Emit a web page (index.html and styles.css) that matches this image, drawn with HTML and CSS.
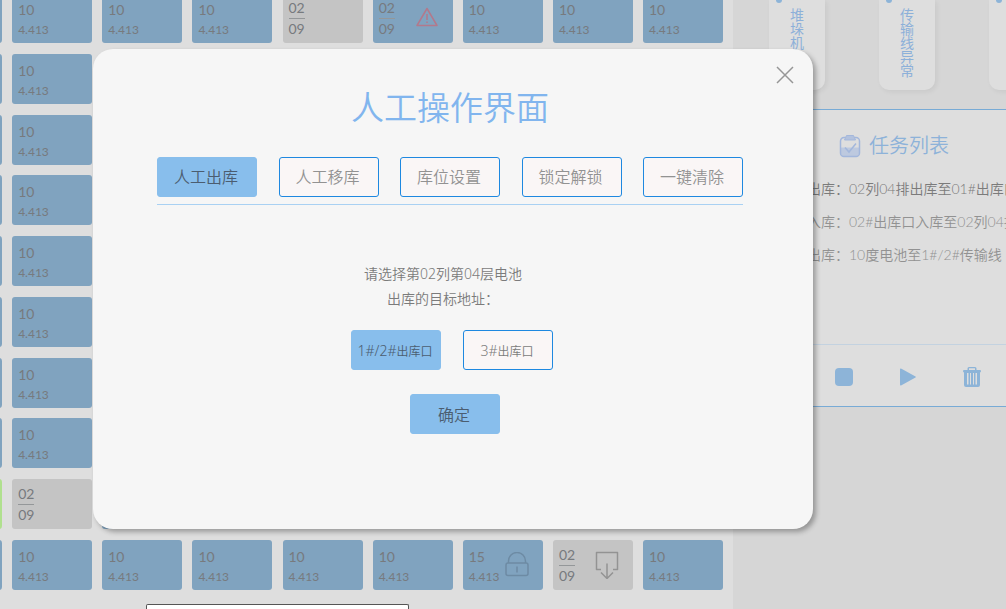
FILE: index.html
```html
<!DOCTYPE html>
<html lang="zh-CN">
<head>
<meta charset="utf-8">
<title>人工操作界面</title>
<link rel="stylesheet" href="styles.css">
</head>
<body>
<div class="app">
  <main class="board">
    <div class="rack">
      <div class="row">
        <div class="cell"></div>
        <div class="cell"><span class="deg">10</span><span class="volt">4.413</span></div>
        <div class="cell"><span class="deg">10</span><span class="volt">4.413</span></div>
        <div class="cell"><span class="deg">10</span><span class="volt">4.413</span></div>
        <div class="cell pos empty"><span class="col">02</span><span class="lay">09</span></div>
        <div class="cell pos"><span class="col">02</span><span class="lay">09</span>
          <svg class="mark alarm" width="24" height="24" viewBox="0 0 24 24"><path d="M12 1.500 22 18.500H2Z"/><path d="M12 7v6M12 14.500v1.500"/></svg></div>
        <div class="cell"><span class="deg">10</span><span class="volt">4.413</span></div>
        <div class="cell"><span class="deg">10</span><span class="volt">4.413</span></div>
        <div class="cell"><span class="deg">10</span><span class="volt">4.413</span></div>
      </div>
      <div class="row"><div class="cell"></div><div class="cell"><span class="deg">10</span><span class="volt">4.413</span></div></div>
      <div class="row"><div class="cell"></div><div class="cell"><span class="deg">10</span><span class="volt">4.413</span></div></div>
      <div class="row"><div class="cell"></div><div class="cell"><span class="deg">10</span><span class="volt">4.413</span></div></div>
      <div class="row"><div class="cell"></div><div class="cell"><span class="deg">10</span><span class="volt">4.413</span></div></div>
      <div class="row"><div class="cell"></div><div class="cell"><span class="deg">10</span><span class="volt">4.413</span></div></div>
      <div class="row"><div class="cell"></div><div class="cell"><span class="deg">10</span><span class="volt">4.413</span></div></div>
      <div class="row"><div class="cell"></div><div class="cell"><span class="deg">10</span><span class="volt">4.413</span></div></div>
      <div class="row"><div class="cell active"></div><div class="cell pos empty"><span class="col">02</span><span class="lay">09</span></div><div class="cell"></div></div>
      <div class="row">
        <div class="cell"></div>
        <div class="cell"><span class="deg">10</span><span class="volt">4.413</span></div>
        <div class="cell"><span class="deg">10</span><span class="volt">4.413</span></div>
        <div class="cell"><span class="deg">10</span><span class="volt">4.413</span></div>
        <div class="cell"><span class="deg">10</span><span class="volt">4.413</span></div>
        <div class="cell"><span class="deg">10</span><span class="volt">4.413</span></div>
        <div class="cell"><span class="deg">15</span><span class="volt">4.413</span>
          <svg class="mark lock" width="24" height="30" viewBox="0 0 24 30"><rect x="1" y="11" width="22" height="12.500" rx="2"/><path d="M3.500 11V9a8.500 8.500 0 0 1 17 0v2M12 14.500v6"/></svg></div>
        <div class="cell pos empty"><span class="col">02</span><span class="lay">09</span>
          <svg class="mark out" width="24" height="28" viewBox="0 0 24 28"><path d="M6 18.500H1.500V1.500h21v17H18M12 12.500v15M6 21.500l6 6 6-6"/></svg></div>
        <div class="cell"><span class="deg">10</span><span class="volt">4.413</span></div>
      </div>
    </div>
    <div class="legend"></div>
  </main>

  <aside class="side">
    <div class="alarms">
      <div class="alarm-card"><i class="dot"></i><span>堆垛机</span></div>
      <div class="alarm-card"><i class="dot"></i><span>传输线异常</span></div>
      <div class="alarm-card"><i class="dot"></i></div>
    </div>
    <section class="tasks">
      <h2 class="tasks-title">
        <svg width="22" height="24" viewBox="0 0 22 24"><path class="clip-fill" d="M2 13.500h18V19a3 3 0 0 1-3 3H5a3 3 0 0 1-3-3Z"/><path class="clip-line" d="M6.500 3.500H5a3.500 3.500 0 0 0-3.500 3.500v12A3.500 3.500 0 0 0 5 22.500h12a3.500 3.500 0 0 0 3.500-3.500V7A3.500 3.500 0 0 0 17 3.500h-1.500"/><path class="clip-top" d="M7.500 1.500h7l2 4.500h-11Z"/><path class="clip-check" d="m6 13.500 4 4.500 7-8.500"/></svg>
        任务列表
      </h2>
      <ul class="task-list">
        <li class="current">出库<span class="colon">：</span>02列04排出库至01#出库口</li>
        <li>入库<span class="colon">：</span>02#出库口入库至02列04排</li>
        <li>出库<span class="colon">：</span>10度电池至1#/2#传输线</li>
      </ul>
      <div class="controls">
        <button type="button" aria-label="停止"><svg width="20" height="20" viewBox="0 0 20 20"><rect x="1" y="1" width="18" height="18" rx="4"/></svg></button>
        <button type="button" aria-label="开始"><svg width="20" height="20" viewBox="0 0 20 20"><path d="M2 2.500Q2 1 3.500 1.800L17.500 9.500q1 .500 0 1L3.500 18.200Q2 19 2 17.500Z"/></svg></button>
        <button type="button" aria-label="删除"><svg width="20" height="22" viewBox="0 0 20 22"><path fill-rule="evenodd" d="M5.500 4V2.500Q5.500 1 7 1h6q1.500 0 1.500 1.500V4H18q1 0 1 1t-1 1.500V19q0 2-2 2H4q-2 0-2-2V6.500Q1 6 1 5t1-1ZM7 2.300V4h6V2.300ZM5 7v11.500h1.500V7ZM8 7v11.500h1V7ZM11 7v11.500h1V7ZM13.500 7v11.500H15V7Z"/></svg></button>
      </div>
    </section>
  </aside>
</div>

<div class="dialog" role="dialog" aria-labelledby="dialog-title">
  <button class="close" type="button" aria-label="关闭"><svg width="18" height="18" viewBox="0 0 18 18"><path d="m1 1 16 16M17 1 1 17"/></svg></button>
  <h1 class="dialog-title" id="dialog-title">人工操作界面</h1>
  <nav class="tabs">
    <button class="btn tab primary" type="button">人工出库</button>
    <button class="btn tab" type="button">人工移库</button>
    <button class="btn tab" type="button">库位设置</button>
    <button class="btn tab" type="button">锁定解锁</button>
    <button class="btn tab" type="button">一键清除</button>
  </nav>
  <p class="prompt">请选择第02列第04层电池<br>出库的目标地址<span class="colon">：</span></p>
  <div class="targets">
    <button class="btn target primary" type="button">1#/2#<small>出库口</small></button>
    <button class="btn target" type="button">3#<small>出库口</small></button>
  </div>
  <button class="btn confirm primary" type="button">确定</button>
</div>
</body>
</html>
```

FILE: styles.css
```css
* {
  box-sizing: border-box;
}

body {
  margin: 0;
  position: relative;
  overflow: hidden;
  background: #dedede;
  color: #7b7b7b;
  font-family: "Noto Sans", "Noto Sans CJK SC", sans-serif;
}

button {
  padding: 0;
  border: 0;
  background: none;
  color: inherit;
  font: inherit;
  cursor: pointer;
}

svg {
  display: block;
}

.colon {
  font-family: "Noto Sans CJK TC", sans-serif;
}

.app {
  display: flex;
  height: 100vh;
}

/* Storage rack */
.board {
  flex: 1;
  min-width: 0;
  display: flex;
  flex-direction: column;
  gap: 14px;
  overflow: hidden;
}

.rack {
  flex: 1;
  display: flex;
  flex-direction: column;
  justify-content: space-between;
  margin: -7px 10px 0 -78px;
}

.row {
  display: grid;
  grid-template-columns: repeat(9, 80px);
  justify-content: space-between;
}

.cell {
  display: grid;
  grid-template-columns: 30px 1fr;
  align-content: start;
  height: 50px;
  padding: 7px 8px 0 6px;
  border-radius: 3px;
  background: #80a3bf;
  color: #777a7e;
  font-family: Lato, sans-serif;
}

.cell.empty {
  background: #c4c4c4;
}

.cell.active {
  background: #b0e08e;
}

.deg,
.volt,
.col,
.lay {
  grid-column: 1;
  line-height: 20px;
}

.deg,
.col,
.lay {
  font-size: 14px;
}

.volt {
  font-size: 12px;
}

.cell.pos {
  padding-top: 5px;
}

.col {
  width: 16px;
  border-bottom: 1px solid #949799;
}

.mark {
  grid-column: 2;
  grid-row: 1 / 3;
  justify-self: center;
  align-self: center;
  fill: none;
  stroke: #6d8ba4;
  stroke-width: 1.5;
  stroke-linejoin: round;
}

.mark.alarm {
  stroke: #b2798c;
}

.mark.out {
  stroke: #939393;
}

.legend {
  height: 5px;
  width: 263px;
  margin-left: 146px;
  border: 1px solid #555;
  border-bottom: 0;
  border-radius: 2px 2px 0 0;
  background: #fff;
}

/* Side panel */
.side {
  width: 273px;
  overflow: hidden;
  background: #d6d6d6;
  white-space: nowrap;
}

.alarms {
  display: flex;
  gap: 54px;
  height: 109px;
  padding-left: 36px;
}

.alarm-card {
  flex: none;
  position: relative;
  width: 56px;
  height: 90px;
  padding-top: 8px;
  border-radius: 0 0 10px 10px;
  background: #dedede;
  box-shadow: 2px 2px 5px rgba(0, 0, 0, 0.06);
  color: #8db0d9;
  font-size: 14px;
  line-height: 14px;
}

.alarm-card span {
  display: block;
  width: 14px;
  margin-left: 21px;
  white-space: normal;
  word-break: break-all;
}

.dot {
  position: absolute;
  top: -3px;
  left: 7px;
  width: 6px;
  height: 6px;
  border-radius: 50%;
  background: #8db4d8;
}

.tasks {
  border-top: 1px solid #78abd6;
  border-bottom: 1px solid #78abd6;
  background: #dedede;
}

.tasks-title {
  display: flex;
  align-items: center;
  gap: 8px;
  margin: 0;
  padding: 20px 0 0 106px;
  color: #8db2d9;
  font-size: 20px;
  font-weight: 350;
  line-height: 32px;
}

.clip-fill {
  fill: #bdc9df;
}

.clip-line,
.clip-check {
  fill: none;
  stroke: #a3b7dc;
  stroke-width: 1.5;
}

.clip-top {
  fill: #b3c2de;
  stroke: #a3b7dc;
}

.task-list {
  height: 183px;
  margin: 0;
  padding: 10px 0 0 74px;
  border-bottom: 1px solid #c3d2e0;
  list-style: none;
  color: #929292;
  font-family: Lato, "Noto Sans CJK SC", sans-serif;
  font-size: 14px;
  font-weight: 350;
  line-height: 33px;
}

.task-list .current {
  color: #7b7b7b;
}

.controls {
  display: flex;
  align-items: center;
  gap: 44px;
  height: 61px;
  padding: 3px 0 0 101px;
}

.controls button {
  width: 20px;
}

.controls svg {
  fill: #8db4d8;
}

/* Manual operation dialog */
.dialog {
  position: absolute;
  top: 49px;
  left: 93px;
  width: 720px;
  min-height: 480px;
  padding: 35px 70px 95px 64px;
  border-radius: 20px;
  background: #f6f6f6;
  box-shadow: 3px 3px 5px rgba(0, 0, 0, 0.3);
  text-align: center;
}

.close {
  position: absolute;
  top: 17px;
  right: 19px;
}

.close svg {
  fill: none;
  stroke: #969696;
  stroke-width: 1.5;
}

.dialog-title {
  margin: 0;
  color: #81b5ee;
  font-size: 33px;
  font-weight: 350;
  line-height: 48px;
}

.tabs {
  display: flex;
  justify-content: space-between;
  margin-top: 25px;
  padding-bottom: 7px;
  border-bottom: 1px solid #a9d1f3;
}

.btn {
  height: 40px;
  border: 1px solid #1e88e0;
  border-radius: 3px;
  background: #faf6f6;
  color: #929292;
  font-weight: 350;
}

.btn.primary {
  border-color: #88beec;
  background: #88beec;
  color: #4b5d70;
}

.tab {
  width: 100px;
  padding: 0 2px 2px 0;
  font-size: 16px;
}

.prompt {
  margin: 56px 14px 0 0;
  font-size: 14px;
  font-weight: 350;
  line-height: 25px;
}

.targets {
  display: flex;
  justify-content: center;
  gap: 22px;
  margin: 19px 0 24px 4px;
}

.target,
.confirm {
  width: 90px;
  padding: 0 2px 0 0;
}

.target {
  color: #7b7b7b;
  font-size: 14px;
}

.target small {
  font-size: 12px;
}

.confirm {
  margin-left: 10px;
  font-size: 16px;
}
```
